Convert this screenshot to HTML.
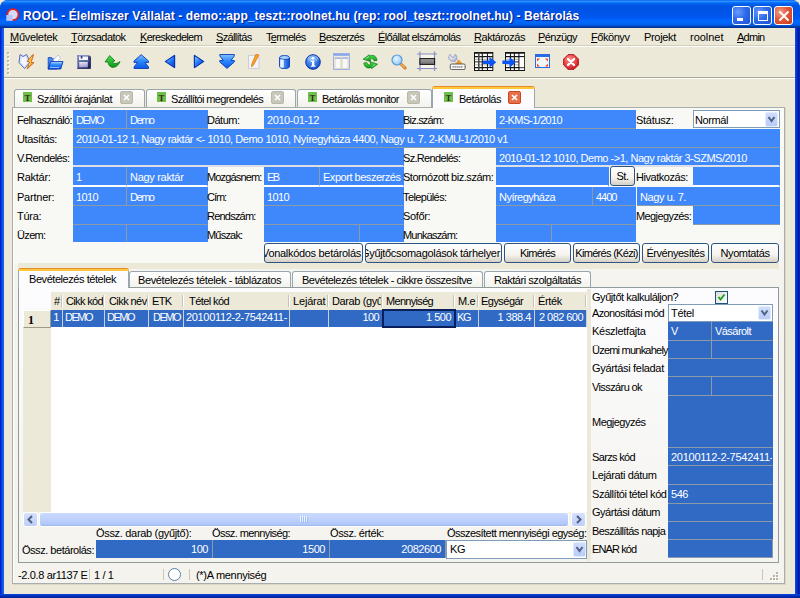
<!DOCTYPE html><html><head><meta charset="utf-8"><title>ROOL</title><style>
*{box-sizing:border-box;margin:0;padding:0}
html,body{width:800px;height:598px;overflow:hidden;background:#ECE9D8}
body{font-family:"Liberation Sans", "DejaVu Sans", sans-serif;font-size:11px;color:#000;position:relative;letter-spacing:-0.45px}
.a{position:absolute;white-space:nowrap;overflow:hidden}
.l{position:absolute;white-space:nowrap;height:19px;line-height:19px;z-index:3}
.fl{line-height:21px}
.f{position:absolute;white-space:nowrap;overflow:hidden;background:#3F88FC;color:#fff;border-right:1px solid #8A9AA6;border-bottom:1px solid #8A9AA6;line-height:20.5px;padding-left:3px}
.d{position:absolute;white-space:nowrap;overflow:hidden;background:#316AC5;color:#fff;border-right:1px solid #8A9AA6;border-bottom:1px solid #8A9AA6;line-height:17px;padding-left:3px}
.b{position:absolute;white-space:nowrap;overflow:hidden;text-align:center;border:1px solid #2E5582;border-radius:3px;background:linear-gradient(#fff 0%,#F4F3EE 60%,#D6D0C5 100%);line-height:18px;height:20px}
u{text-decoration:underline}
</style></head><body>
<div class="a" style="left:0px;top:0px;width:800px;height:598px;background:#0054E3;border-radius:8px 8px 0 0"></div>
<div class="a" style="left:0px;top:0px;width:800px;height:28px;border-radius:8px 8px 0 0;background:linear-gradient(#0058EE 0%,#3593FF 4%,#288EFF 6%,#127DFF 8%,#036FFC 10%,#0262EE 14%,#0057E5 20%,#0054E3 24%,#0055EB 56%,#005BF5 66%,#026AFE 76%,#0062EF 86%,#0052D6 92%,#0040AB 94%,#003092 100%)"></div>
<div class="a" style="left:4px;top:28px;width:791px;height:566px;background:#ECE9D8"></div>
<div class="a" style="left:795px;top:28px;width:5px;height:570px;background:linear-gradient(to right,#1A50EC 0%,#0030D0 35%,#00189C 75%,#0030C0 100%)"></div>
<div class="a" style="left:0px;top:28px;width:4px;height:570px;background:linear-gradient(to right,#0014D0 0%,#0838DC 35%,#0A5AE8 65%,#1E68E4 100%)"></div>
<div class="a" style="left:0px;top:594px;width:800px;height:4px;background:linear-gradient(#0A48DC,#002FB8 50%,#001F9C)"></div>
<svg class="a" style="left:6px;top:8px" width="15" height="14" viewBox="0 0 15 14"><circle cx="6.900" cy="6.600" r="5.500" fill="#D4DEF6" stroke="#F01C1C" stroke-width="1.700"/><rect x="0.300" y="7" width="6.300" height="5.900" fill="#B2C8F6"/></svg>
<div class="a" style="left:23px;top:6px;height:20px;line-height:20px;color:#fff;font-weight:bold;font-size:12px;letter-spacing:0.08px;text-shadow:1px 1px 1px #0A1883">ROOL - Élelmiszer Vállalat - demo::app_teszt::roolnet.hu (rep: rool_teszt::roolnet.hu) - Betárolás</div>
<div class="a" style="left:732px;top:6px;width:19px;height:19px;border:1px solid #fff;border-radius:3px;background:radial-gradient(circle at 30% 30%,#6A9CFF 0%,#2F6BEA 45%,#1F50D0 100%)"><div class="a" style="left:4px;top:11px;width:6px;height:3px;background:#fff"></div></div>
<div class="a" style="left:753px;top:6px;width:19px;height:19px;border:1px solid #fff;border-radius:3px;background:radial-gradient(circle at 30% 30%,#6A9CFF 0%,#2F6BEA 45%,#1F50D0 100%)"><div class="a" style="left:4px;top:4px;width:10px;height:10px;border:1px solid #fff;border-top:3px solid #fff"></div></div>
<div class="a" style="left:774px;top:6px;width:19px;height:19px;border:1px solid #fff;border-radius:3px;background:radial-gradient(circle at 30% 30%,#F0A088 0%,#E1573A 45%,#C73A1E 100%)"><svg class="a" style="left:0;top:0" width="19" height="19"><path d="M5 5L13 13M13 5L5 13" stroke="#fff" stroke-width="1.900" stroke-linecap="round"/></svg></div>
<div class="l" style="left:10px;top:28px;height:18px;line-height:18px;letter-spacing:-0.295px;"><u>M</u>űveletek</div>
<div class="l" style="left:71px;top:28px;height:18px;line-height:18px;letter-spacing:-0.550px;"><u>T</u>örzsadatok</div>
<div class="l" style="left:140px;top:28px;height:18px;line-height:18px;letter-spacing:-0.694px;"><u>K</u>ereskedelem</div>
<div class="l" style="left:216px;top:28px;height:18px;line-height:18px;letter-spacing:-0.677px;"><u>S</u>zállítás</div>
<div class="l" style="left:266px;top:28px;height:18px;line-height:18px;letter-spacing:-0.643px;">T<u>e</u>rmelés</div>
<div class="l" style="left:319px;top:28px;height:18px;line-height:18px;letter-spacing:-0.708px;"><u>B</u>eszerzés</div>
<div class="l" style="left:378px;top:28px;height:18px;line-height:18px;letter-spacing:-0.614px;"><u>É</u>lőállat elszámolás</div>
<div class="l" style="left:474px;top:28px;height:18px;line-height:18px;letter-spacing:-0.466px;"><u>R</u>aktározás</div>
<div class="l" style="left:538px;top:28px;height:18px;line-height:18px;letter-spacing:-0.547px;"><u>P</u>énzügy</div>
<div class="l" style="left:591px;top:28px;height:18px;line-height:18px;letter-spacing:-0.442px;"><u>F</u>őkönyv</div>
<div class="l" style="left:644px;top:28px;height:18px;line-height:18px;letter-spacing:-0.324px;">Pro<u>j</u>ekt</div>
<div class="l" style="left:690px;top:28px;height:18px;line-height:18px;letter-spacing:-0.020px;">roolnet</div>
<div class="l" style="left:737px;top:28px;height:18px;line-height:18px;letter-spacing:-0.738px;"><u>A</u>dmin</div>
<div class="a" style="left:4px;top:45px;width:791px;height:1px;background:#D2CEBB"></div>
<div class="a" style="left:4px;top:46px;width:791px;height:1px;background:#fff"></div>
<div class="a" style="left:4px;top:77px;width:791px;height:1px;background:#ACA899"></div>
<div class="a" style="left:4px;top:78px;width:791px;height:1px;background:#fff"></div>
<div class="a" style="left:8px;top:53px;width:2px;height:2px;background:#fff"></div>
<div class="a" style="left:7px;top:52px;width:2px;height:2px;background:#BDBAAA"></div>
<div class="a" style="left:8px;top:57px;width:2px;height:2px;background:#fff"></div>
<div class="a" style="left:7px;top:56px;width:2px;height:2px;background:#BDBAAA"></div>
<div class="a" style="left:8px;top:61px;width:2px;height:2px;background:#fff"></div>
<div class="a" style="left:7px;top:60px;width:2px;height:2px;background:#BDBAAA"></div>
<div class="a" style="left:8px;top:65px;width:2px;height:2px;background:#fff"></div>
<div class="a" style="left:7px;top:64px;width:2px;height:2px;background:#BDBAAA"></div>
<div class="a" style="left:8px;top:69px;width:2px;height:2px;background:#fff"></div>
<div class="a" style="left:7px;top:68px;width:2px;height:2px;background:#BDBAAA"></div>
<div class="a" style="left:8px;top:73px;width:2px;height:2px;background:#fff"></div>
<div class="a" style="left:7px;top:72px;width:2px;height:2px;background:#BDBAAA"></div>
<svg width="0" height="0" style="position:absolute"><defs>
<linearGradient id="gb" x1="0" y1="0" x2="0" y2="1"><stop offset="0" stop-color="#86C4FF"/><stop offset="0.450" stop-color="#2E88FA"/><stop offset="1" stop-color="#0C58E6"/></linearGradient>
<linearGradient id="gbh" x1="0" y1="0" x2="1" y2="0"><stop offset="0" stop-color="#7FBFFF"/><stop offset="1" stop-color="#0A50DC"/></linearGradient>
<linearGradient id="gg" x1="0" y1="0" x2="0" y2="1"><stop offset="0" stop-color="#4FE052"/><stop offset="1" stop-color="#0E9418"/></linearGradient>
<radialGradient id="gi" cx="0.4" cy="0.3" r="0.8"><stop offset="0" stop-color="#6DB5FF"/><stop offset="1" stop-color="#0B45C8"/></radialGradient>
<radialGradient id="gr" cx="0.4" cy="0.3" r="0.8"><stop offset="0" stop-color="#FF8A80"/><stop offset="1" stop-color="#D0101C"/></radialGradient>
<radialGradient id="gl" cx="0.4" cy="0.35" r="0.7"><stop offset="0" stop-color="#E8F6FF"/><stop offset="1" stop-color="#8CC8F4"/></radialGradient>
<linearGradient id="gf" x1="0" y1="0" x2="1" y2="1"><stop offset="0" stop-color="#8A94C8"/><stop offset="0.600" stop-color="#39427E"/><stop offset="1" stop-color="#10164E"/></linearGradient><linearGradient id="gfl" x1="0" y1="0" x2="0.300" y2="1"><stop offset="0" stop-color="#ECEAF8"/><stop offset="1" stop-color="#A29ECC"/></linearGradient>
<linearGradient id="gbar" x1="0" y1="0" x2="0" y2="1"><stop offset="0" stop-color="#A4A4A4"/><stop offset="1" stop-color="#6C6C6C"/></linearGradient><radialGradient id="gw" cx="0.350" cy="0.300" r="0.900"><stop offset="0" stop-color="#FFFFFF"/><stop offset="1" stop-color="#9A9EC4"/></radialGradient><linearGradient id="gtri" x1="0" y1="0" x2="0.600" y2="1"><stop offset="0" stop-color="#9AD0FF"/><stop offset="0.500" stop-color="#2C84FA"/><stop offset="1" stop-color="#0A56E4"/></linearGradient></defs></svg><svg class="a" style="left:18px;top:53px" width="17" height="17" viewBox="0 0 17 17"><path d="M2 1.500L5 3.500L8.600 1.500L12 9L6.600 15.600L1 9.600Z" fill="#DCE6FA" stroke="#5A6CB8" stroke-width="1" stroke-linejoin="round"/><path d="M4 5L7 4L9.500 9L6.500 13L3 9.500Z" fill="#F4F8FF"/><path d="M14.600 1.800L9 8.600L12 8.600L9.100 16L16 9.600L13 9.500L15.600 1.800Z" fill="#F9A51C" stroke="#C8501A" stroke-width="0.800" stroke-linejoin="round"/><path d="M13.800 4L11 8L13 8.300L11 12.500" stroke="#FFD84A" stroke-width="1" fill="none"/></svg>
<svg class="a" style="left:47px;top:54px" width="17" height="16" viewBox="0 0 17 16"><path d="M1.200 15V3.600H4.500L5.500 5H10V15Z" fill="#4A88F0" stroke="#1848C0" stroke-width="0.900"/><path d="M6.200 6L11.200 1L13.400 4.500L9 9Z" fill="#fff" stroke="#9AB4E8" stroke-width="0.700"/><path d="M1.200 15L3.600 7.600H16L13.700 15Z" fill="url(#gb)" stroke="#0A38B0" stroke-width="0.900" stroke-linejoin="round"/><path d="M4.300 8.700H14.500" stroke="#9CC8FF" stroke-width="0.900"/><path d="M3 13.500H12" stroke="#BBD4FF" stroke-width="0.900" opacity="0.800"/></svg>
<svg class="a" style="left:77px;top:55px" width="14" height="14" viewBox="0 0 14 14"><path d="M0.500 0.500H12L13.500 2V13.500H0.500Z" fill="url(#gf)" stroke="#1A2060" stroke-width="0.800"/><path d="M0.500 13V0.500H12" stroke="#8A92C8" stroke-width="1" fill="none"/><rect x="2" y="1.500" width="9" height="3.500" fill="#F4F6FC"/><rect x="3.800" y="1" width="1.600" height="2.600" fill="#2A3880"/><rect x="1.500" y="5.200" width="10" height="1.400" fill="#5E7CAC"/><rect x="2.200" y="7" width="8.600" height="5.300" fill="url(#gfl)"/></svg>
<svg class="a" style="left:104px;top:54px" width="17" height="15" viewBox="0 0 17 15"><path d="M5.700 1.500L11 7L8.500 7.500C9 10 12 10.500 16 7.500C14.500 12 10 14.500 7 13C4.500 11.500 4 9.500 4.200 8L1 8Z" fill="url(#gg)" stroke="#0B7A12" stroke-width="0.8" stroke-linejoin="round"/></svg>
<svg class="a" style="left:133px;top:54px" width="16" height="15" viewBox="0 0 16 15"><path d="M8.200 0.600L15.500 7V8.500H12L15.500 13V14.500H1V13L4.500 8.500H1V7Z" fill="url(#gb)" stroke="#0A3CB8" stroke-width="0.9" stroke-linejoin="round"/></svg>
<svg class="a" style="left:164px;top:54px" width="12" height="15" viewBox="0 0 12 15"><path d="M10.500 1.500V13.500L1.500 7.500Z" fill="url(#gbh)" stroke="#0A36B4" stroke-width="1.400" stroke-linejoin="round"/><path d="M9.700 2.800V12.200L2.600 7.500Z" fill="url(#gtri)"/></svg>
<svg class="a" style="left:193px;top:54px" width="12" height="15" viewBox="0 0 12 15"><path d="M1.500 1.500V13.500L10.500 7.500Z" fill="url(#gbh)" stroke="#0A36B4" stroke-width="1.400" stroke-linejoin="round"/><path d="M2.300 2.800V12.200L9.400 7.500Z" fill="url(#gtri)"/></svg>
<svg class="a" style="left:219px;top:54px" width="16" height="15" viewBox="0 0 16 15"><path d="M8 14.400L15.300 8V6.500H12L15.300 2V0.500H0.800V2L4.300 6.500H0.800V8Z" fill="url(#gb)" stroke="#0A3CB8" stroke-width="0.9" stroke-linejoin="round"/></svg>
<svg class="a" style="left:248px;top:54px" width="12" height="15" viewBox="0 0 12 15"><path d="M0.500 1.500H9L11 3V14.500H0.500Z" fill="#F4F4F8" stroke="#C4C4D0" stroke-width="0.8"/><path d="M8 0L11 1L5.500 11L3.500 13L3.800 10Z" fill="#F7A21B" stroke="#D8741A" stroke-width="0.7"/></svg>
<svg class="a" style="left:279px;top:55px" width="11" height="14" viewBox="0 0 11 14"><path d="M0.500 2.500V11.500C0.500 14.300 10.500 14.300 10.500 11.500V2.500" fill="url(#gbh)" stroke="#0A3CB8" stroke-width="0.9"/><ellipse cx="5.500" cy="2.500" rx="5" ry="2" fill="#A8D0FF" stroke="#0A3CB8" stroke-width="0.9"/><rect x="1.300" y="4.500" width="3.500" height="8" fill="#fff" opacity="0.85"/></svg>
<svg class="a" style="left:305px;top:54px" width="16" height="16" viewBox="0 0 16 16"><circle cx="8" cy="8" r="7.300" fill="url(#gi)" stroke="#0A32A8" stroke-width="1"/><ellipse cx="8" cy="4.500" rx="5.500" ry="3.300" fill="#fff" opacity="0.280"/><circle cx="8" cy="4.300" r="1.400" fill="#fff"/><path d="M5.800 6.800H9.300V11.500H10.500V12.800H5.800V11.500H7V8H5.800Z" fill="#fff"/></svg>
<svg class="a" style="left:333px;top:53px" width="17" height="17" viewBox="0 0 17 17"><rect x="0.500" y="0.500" width="16" height="16" fill="#F0ECE0" stroke="#8AA4E8" stroke-width="0.800"/><rect x="1" y="1" width="15" height="1.800" fill="#86A6EE"/><rect x="2" y="4.500" width="6" height="11" fill="#FAF8F2" stroke="#C8C4B4" stroke-width="0.6"/><rect x="9" y="4.500" width="6" height="11" fill="#FAF8F2" stroke="#C8C4B4" stroke-width="0.6"/><rect x="2" y="4.500" width="6" height="1.500" fill="#A8B8E8"/><rect x="9" y="4.500" width="6" height="1.500" fill="#A8B8E8"/></svg>
<svg class="a" style="left:363px;top:54px" width="15" height="16" viewBox="0 0 15 16"><path d="M0.200 5.200L6.200 0.800L6.600 2.200C9.500 0.200 13.500 1.800 14 6.400L11 6.900C10.600 4.600 8.800 4.200 7.200 5L7.600 7.600Z" fill="url(#gg)" stroke="#0A7A14" stroke-width="0.700" stroke-linejoin="round"/><path d="M14.600 10.200L8.600 14.600L8.200 13.200C5.300 15.200 1.300 13.600 0.800 9L3.800 8.500C4.200 10.800 6 11.200 7.600 10.400L7.200 7.800Z" fill="url(#gg)" stroke="#0A7A14" stroke-width="0.700" stroke-linejoin="round"/><path d="M2.500 5L5.800 2.600M9.200 12.600L12 10.400" stroke="#8CF08C" stroke-width="0.900" fill="none"/></svg>
<svg class="a" style="left:391px;top:54px" width="16" height="16" viewBox="0 0 16 16"><path d="M9 9L14 14" stroke="#C8741A" stroke-width="3" stroke-linecap="round"/><path d="M9.500 9.500L13.500 13.500" stroke="#F4B86A" stroke-width="1.200" stroke-linecap="round"/><circle cx="6" cy="6" r="5" fill="url(#gl)" stroke="#5A9ADC" stroke-width="1.200"/></svg>
<svg class="a" style="left:417px;top:51px" width="20" height="20" viewBox="0 0 20 20"><rect x="3" y="3" width="14.500" height="14.500" fill="#F8F6EA"/><path d="M3 0.500V20M17.500 0.500V20M0 3H20M0 17.500H20" stroke="#8A8CC4" stroke-width="1.200"/><rect x="2.900" y="7.600" width="14.700" height="5.800" fill="url(#gbar)" stroke="#141414" stroke-width="1"/></svg>
<svg class="a" style="left:448px;top:53px" width="18" height="17" viewBox="0 0 18 17"><path d="M5.500 5.500L10 9.500" stroke="#A8ACCC" stroke-width="3.400" stroke-linecap="round"/><path d="M5.500 5.500L10 9.500" stroke="#E8EAF6" stroke-width="1.800" stroke-linecap="round"/><path d="M10.900 6.600L15 11.500H7Z" fill="#F7941B"/><path d="M2.200 1.300C0.200 3 0.300 6.300 2.600 7.800C4.800 9.200 7.800 8.300 8.600 5.800C9.200 4 8.600 2.200 7.200 1.200L5.800 4.200L3.600 4.200Z" fill="url(#gw)" stroke="#8890B8" stroke-width="0.700"/><rect x="2.300" y="11" width="14.800" height="5.600" rx="1.200" fill="#FAFAFA" stroke="#5A5A5A" stroke-width="1"/><path d="M4.500 13.800H15" stroke="#8A8A8A" stroke-width="1.800" stroke-dasharray="1.300 0.700"/></svg>
<svg class="a" style="left:474px;top:52px" width="23" height="19" viewBox="0 0 23 19"><rect x="0.500" y="0.500" width="18.300" height="18" fill="#fff" stroke="#111" stroke-width="1"/><path d="M0.500 1.200H18.800M0.500 4.700H18.800M0.500 15.600H18.800" stroke="#161616" stroke-width="1.300"/><path d="M0.500 9.900H18.800" stroke="#222" stroke-width="1"/><path d="M0.500 7.300H18.800M0.500 12.800H18.800" stroke="#8A8A8A" stroke-width="0.700"/><path d="M4.800 0.500V18.500" stroke="#444" stroke-width="1.500"/><path d="M8.300 0.500V18.500M13.500 0.500V18.500" stroke="#1A1A1A" stroke-width="1.100"/><rect x="14.300" y="16.500" width="3.800" height="1.300" fill="#fff"/><rect x="14.300" y="1.900" width="3.800" height="1.600" fill="#fff"/><path d="M9.100 8.400H15.500V5L22.300 10.300L15.500 15.700V12.100H9.100Z" fill="#0A54F4"/></svg>
<svg class="a" style="left:502px;top:52px" width="23" height="19" viewBox="0 0 23 19"><rect x="3.500" y="0.500" width="19.200" height="18" fill="#fff" stroke="#111" stroke-width="1"/><path d="M3.500 1.200H22.700M3.500 4.700H22.700M3.500 15.600H22.700" stroke="#161616" stroke-width="1.300"/><path d="M3.500 9.900H17" stroke="#222" stroke-width="1"/><path d="M3.500 7.300H17M3.500 12.800H17" stroke="#8A8A8A" stroke-width="0.700"/><path d="M8.500 0.500V18.500M12.400 0.500V18.500" stroke="#1A1A1A" stroke-width="1.100"/><path d="M17 0.500V18.500" stroke="#1A1A1A" stroke-width="1.200"/><rect x="17.700" y="5.400" width="4.300" height="9.900" fill="#fff"/><rect x="17.700" y="1.900" width="4.300" height="1.600" fill="#fff"/><rect x="17.700" y="16.600" width="4.300" height="1" fill="#fff"/><path d="M0.400 8.400H7.500V5L13.700 10.300L7.500 15.700V12.100H0.400Z" fill="#0A54F4"/></svg>
<svg class="a" style="left:535px;top:54px" width="15" height="14" viewBox="0 0 15 14"><rect x="0.500" y="0.500" width="14" height="13" fill="#F4F6FA" stroke="#2A6AE8" stroke-width="1"/><rect x="0.500" y="0.500" width="14" height="2.500" fill="#2A6AE8"/><path d="M2 4.500H5L2 7.500ZM13 4.500H10L13 7.500ZM2 12.500H5L2 9.500ZM13 12.500H10L13 9.500Z" fill="#F0481E"/></svg>
<svg class="a" style="left:563px;top:54px" width="16" height="16" viewBox="0 0 16 16"><path d="M5 0.700H11L15.300 5V11L11 15.300H5L0.700 11V5Z" fill="url(#gr)" stroke="#B00A14" stroke-width="1"/><path d="M5 5L11 11M11 5L5 11" stroke="#fff" stroke-width="2.400" stroke-linecap="round"/></svg>

<div class="a" style="left:12px;top:107px;width:773px;height:477px;background:linear-gradient(#FBFBF9,#F4F3EE 40%);border:1px solid #A8AEAE;box-shadow:1px 1px 0 #DAD7C8,inset 1px 1px 0 #fff"></div>
<div class="a" style="left:14px;top:89px;width:131px;height:18px;background:linear-gradient(#FFFFFF,#F3F2EC);border:1px solid #9AA6AE;border-bottom:none;border-radius:3px 3px 0 0"></div>
<div class="a" style="left:23px;top:92px;width:9px;height:10px;background:#6FC04A;color:#35281C;font-family:'Liberation Serif',serif;font-weight:bold;font-size:9px;line-height:12px;text-align:center;letter-spacing:0">T</div>
<div class="l" style="left:37px;top:90px;height:18px;line-height:18px;letter-spacing:-0.462px;">Szállítói árajánlat</div>
<div class="a" style="left:120px;top:91px;width:13px;height:13px;background:#C9C7BA;border:1px solid #B9B7A8;border-radius:2px"><svg class="a" style="left:0;top:0" width="11" height="11"><path d="M3 3L8 8M8 3L3 8" stroke="#fff" stroke-width="1.7"/></svg></div>
<div class="a" style="left:146px;top:89px;width:150px;height:18px;background:linear-gradient(#FFFFFF,#F3F2EC);border:1px solid #9AA6AE;border-bottom:none;border-radius:3px 3px 0 0"></div>
<div class="a" style="left:157px;top:92px;width:9px;height:10px;background:#6FC04A;color:#35281C;font-family:'Liberation Serif',serif;font-weight:bold;font-size:9px;line-height:12px;text-align:center;letter-spacing:0">T</div>
<div class="l" style="left:171px;top:90px;height:18px;line-height:18px;letter-spacing:-0.627px;">Szállítói megrendelés</div>
<div class="a" style="left:271px;top:91px;width:13px;height:13px;background:#C9C7BA;border:1px solid #B9B7A8;border-radius:2px"><svg class="a" style="left:0;top:0" width="11" height="11"><path d="M3 3L8 8M8 3L3 8" stroke="#fff" stroke-width="1.7"/></svg></div>
<div class="a" style="left:297px;top:89px;width:135px;height:18px;background:linear-gradient(#FFFFFF,#F3F2EC);border:1px solid #9AA6AE;border-bottom:none;border-radius:3px 3px 0 0"></div>
<div class="a" style="left:308px;top:92px;width:9px;height:10px;background:#6FC04A;color:#35281C;font-family:'Liberation Serif',serif;font-weight:bold;font-size:9px;line-height:12px;text-align:center;letter-spacing:0">T</div>
<div class="l" style="left:322px;top:90px;height:18px;line-height:18px;letter-spacing:-0.542px;">Betárolás monitor</div>
<div class="a" style="left:407px;top:91px;width:13px;height:13px;background:#C9C7BA;border:1px solid #B9B7A8;border-radius:2px"><svg class="a" style="left:0;top:0" width="11" height="11"><path d="M3 3L8 8M8 3L3 8" stroke="#fff" stroke-width="1.7"/></svg></div>
<div class="a" style="left:432px;top:86px;width:103px;height:22px;background:#FCFCFE;border:1px solid #9AA6AE;border-bottom:none;border-radius:3px 3px 0 0;border-top:none"></div>
<div class="a" style="left:432px;top:86px;width:103px;height:3px;background:linear-gradient(#E68B2C 0,#E68B2C 33%,#FFC73C 34%);border-radius:3px 3px 0 0"></div>
<div class="a" style="left:444px;top:92px;width:9px;height:10px;background:#6FC04A;color:#35281C;font-family:'Liberation Serif',serif;font-weight:bold;font-size:9px;line-height:12px;text-align:center;letter-spacing:0">T</div>
<div class="l" style="left:459px;top:90px;height:18px;line-height:18px;letter-spacing:-0.498px;">Betárolás</div>
<div class="a" style="left:508px;top:91px;width:13px;height:13px;background:#E4704C;border:1px solid #D2441E;border-radius:2px"><svg class="a" style="left:0;top:0" width="11" height="11"><path d="M3 3L8 8M8 3L3 8" stroke="#fff" stroke-width="1.7"/></svg></div>
<div class="a" style="left:14px;top:108px;width:766px;height:156px;background:#F8F8F5"></div>
<div class="l fl" style="left:17px;top:110px;letter-spacing:-0.615px;">Felhasználó:</div>
<div class="f" style="left:73px;top:110px;width:54px;height:19px;letter-spacing:-1.500px;">DEMO</div>
<div class="f" style="left:127px;top:110px;width:81px;height:19px;letter-spacing:-1.461px;border-right-color:#3F88FC;">Demo</div>
<div class="l fl" style="left:207px;top:110px;letter-spacing:-0.495px;">Dátum:</div>
<div class="f" style="left:264px;top:110px;width:140px;height:19px;letter-spacing:-0.428px;border-right-color:#3F88FC;">2010-01-12</div>
<div class="l fl" style="left:403px;top:110px;letter-spacing:-0.799px;">Biz.szám:</div>
<div class="f" style="left:496px;top:110px;width:140px;height:19px;letter-spacing:-0.661px;border-right-color:#3F88FC;">2-KMS-1/2010</div>
<div class="l fl" style="left:636px;top:110px;letter-spacing:-0.294px;">Státusz:</div>
<div class="a" style="left:693px;top:110px;width:87px;height:18px;background:#fff;border:1px solid #7F9DB9;line-height:19px;padding-left:1px;letter-spacing:-0.409px;">Normál</div>
<div class="a" style="left:765px;top:112px;width:13px;height:15px;background:linear-gradient(#CFDDFD,#B9CBF8);border:1px solid #E3EBFE;border-radius:2px"><svg class="a" style="left:0;top:0" width="11" height="13" viewBox="0 0 11 13"><path d="M2.500 4.0L5.5 8.0L8.5 4.0" stroke="#4D6185" stroke-width="2" fill="none"/></svg></div>
<div class="l fl" style="left:17px;top:129px;letter-spacing:-0.378px;">Utasítás:</div>
<div class="f" style="left:73px;top:129px;width:707px;height:19px;letter-spacing:-0.455px;border-right-color:#3F88FC;">2010-01-12 1, Nagy raktár &lt;- 1010, Demo 1010, Nyíregyháza 4400, Nagy u. 7. 2-KMU-1/2010 v1</div>
<div class="l fl" style="left:17px;top:148px;letter-spacing:-0.584px;">V.Rendelés:</div>
<div class="f" style="left:73px;top:148px;width:331px;height:19px;border-bottom:2px solid #DCE0E6;border-right-color:#3F88FC;"></div>
<div class="l fl" style="left:403px;top:148px;letter-spacing:-0.678px;">Sz.Rendelés:</div>
<div class="f" style="left:496px;top:148px;width:284px;height:19px;border-bottom:2px solid #DCE0E6;letter-spacing:-0.488px;border-right-color:#3F88FC;">2010-01-12 1010, Demo -&gt;1, Nagy raktár 3-SZMS/2010</div>
<div class="l fl" style="left:17px;top:167px;letter-spacing:-0.267px;">Raktár:</div>
<div class="f" style="left:73px;top:167px;width:54px;height:20px;border-bottom:2px solid #fff;">1</div>
<div class="f" style="left:127px;top:167px;width:81px;height:20px;border-bottom:2px solid #fff;letter-spacing:-0.305px;border-right-color:#3F88FC;">Nagy raktár</div>
<div class="l fl" style="left:207px;top:167px;letter-spacing:-0.838px;">Mozgásnem:</div>
<div class="f" style="left:264px;top:167px;width:56px;height:20px;border-bottom:2px solid #fff;letter-spacing:-1.594px;">EB</div>
<div class="f" style="left:320px;top:167px;width:84px;height:20px;border-bottom:2px solid #fff;letter-spacing:-0.468px;border-right-color:#3F88FC;">Export beszerzés</div>
<div class="l fl" style="left:403px;top:167px;letter-spacing:-0.463px;">Stornózott biz.szám:</div>
<div class="f" style="left:496px;top:167px;width:113px;height:20px;border-bottom:2px solid #fff;border-right-color:#3F88FC;"></div>
<div class="b" style="left:610px;top:166px;width:25px;">St.</div>
<div class="l fl" style="left:636px;top:167px;letter-spacing:-0.451px;">Hivatkozás:</div>
<div class="f" style="left:693px;top:167px;width:87px;height:20px;border-bottom:2px solid #fff;border-right-color:#3F88FC;"></div>
<div class="l fl" style="left:17px;top:187px;letter-spacing:-0.218px;">Partner:</div>
<div class="f" style="left:73px;top:187px;width:54px;height:19px;letter-spacing:-0.621px;">1010</div>
<div class="f" style="left:127px;top:187px;width:81px;height:19px;letter-spacing:-1.461px;border-right-color:#3F88FC;">Demo</div>
<div class="l fl" style="left:207px;top:187px;letter-spacing:-1.059px;">Cím:</div>
<div class="f" style="left:264px;top:187px;width:140px;height:19px;letter-spacing:-0.621px;border-right-color:#3F88FC;">1010</div>
<div class="l fl" style="left:403px;top:187px;letter-spacing:-0.605px;">Település:</div>
<div class="f" style="left:496px;top:187px;width:97px;height:19px;letter-spacing:-0.524px;">Nyíregyháza</div>
<div class="f" style="left:593px;top:187px;width:43px;height:19px;letter-spacing:-0.996px;border-right-color:#3F88FC;">4400</div>
<div class="f" style="left:637px;top:187px;width:143px;height:19px;letter-spacing:-0.414px;border-right-color:#3F88FC;">Nagy u. 7.</div>
<div class="l fl" style="left:17px;top:206px;letter-spacing:-0.277px;">Túra:</div>
<div class="f" style="left:73px;top:206px;width:135px;height:19px;border-right-color:#3F88FC;"></div>
<div class="l fl" style="left:207px;top:206px;letter-spacing:-0.782px;">Rendszám:</div>
<div class="f" style="left:264px;top:206px;width:140px;height:19px;border-right-color:#3F88FC;"></div>
<div class="l fl" style="left:403px;top:206px;letter-spacing:-0.360px;">Sofőr:</div>
<div class="f" style="left:496px;top:206px;width:140px;height:19px;border-right-color:#3F88FC;"></div>
<div class="l fl" style="left:636px;top:206px;letter-spacing:-0.597px;">Megjegyzés:</div>
<div class="f" style="left:693px;top:206px;width:87px;height:19px;border-right-color:#3F88FC;"></div>
<div class="l fl" style="left:17px;top:225px;letter-spacing:-0.656px;">Üzem:</div>
<div class="f" style="left:73px;top:225px;width:54px;height:17px;border-bottom-color:#3F88FC;"></div>
<div class="f" style="left:127px;top:225px;width:81px;height:17px;border-bottom-color:#3F88FC;border-right-color:#3F88FC;"></div>
<div class="l fl" style="left:207px;top:225px;letter-spacing:-0.796px;">Műszak:</div>
<div class="f" style="left:264px;top:225px;width:96px;height:17px;border-bottom-color:#3F88FC;"></div>
<div class="f" style="left:360px;top:225px;width:44px;height:17px;border-bottom-color:#3F88FC;border-right-color:#3F88FC;"></div>
<div class="l fl" style="left:403px;top:225px;letter-spacing:-0.806px;">Munkaszám:</div>
<div class="f" style="left:496px;top:225px;width:56px;height:17px;border-bottom-color:#3F88FC;"></div>
<div class="f" style="left:552px;top:225px;width:84px;height:17px;border-bottom-color:#3F88FC;border-right-color:#3F88FC;"></div>
<div class="b" style="left:264px;top:243px;width:99px;display:flex;justify-content:flex-end;padding-right:1px;letter-spacing:-0.309px;"><span>Vonalkódos betárolás</span></div>
<div class="b" style="left:365px;top:243px;width:137px;display:flex;justify-content:flex-end;padding-right:1px;letter-spacing:-0.320px;"><span>Gyűjtőcsomagolások tárhelyer</span></div>
<div class="b" style="left:504px;top:243px;width:67px;display:flex;justify-content:center;letter-spacing:-0.763px;"><span>Kimérés</span></div>
<div class="b" style="left:573px;top:243px;width:67px;display:flex;justify-content:center;letter-spacing:-0.688px;"><span>Kimérés (Kézi)</span></div>
<div class="b" style="left:642px;top:243px;width:67px;display:flex;justify-content:center;letter-spacing:-0.466px;"><span>Érvényesítés</span></div>
<div class="b" style="left:711px;top:243px;width:68px;display:flex;justify-content:center;letter-spacing:-0.398px;"><span>Nyomtatás</span></div>
<div class="a" style="left:18px;top:263px;width:761px;height:6px;background:#ECE9D8"></div>
<div class="a" style="left:18px;top:287px;width:761px;height:276px;background:linear-gradient(#FCFCFE,#F4F3EE);border:1px solid #919B9C"></div>
<div class="a" style="left:18px;top:268px;width:111px;height:20px;background:#FCFCFE;border:1px solid #9AA6AE;border-bottom:none;border-radius:3px 3px 0 0;border-top:none"></div>
<div class="a" style="left:18px;top:268px;width:111px;height:3px;background:linear-gradient(#E68B2C 0,#E68B2C 33%,#FFC73C 34%);border-radius:3px 3px 0 0"></div>
<div class="l" style="left:29px;top:271px;height:17px;line-height:17px;letter-spacing:-0.442px;">Bevételezés tételek</div>
<div class="a" style="left:129px;top:271px;width:162px;height:16px;background:linear-gradient(#FFFFFF,#F3F2EC);border:1px solid #9AA6AE;border-bottom:none;border-radius:3px 3px 0 0"></div>
<div class="l" style="left:138px;top:272px;height:17px;line-height:17px;letter-spacing:-0.385px;">Bevételezés tételek - táblázatos</div>
<div class="a" style="left:292px;top:271px;width:191px;height:16px;background:linear-gradient(#FFFFFF,#F3F2EC);border:1px solid #9AA6AE;border-bottom:none;border-radius:3px 3px 0 0"></div>
<div class="l" style="left:302px;top:272px;height:17px;line-height:17px;letter-spacing:-0.485px;">Bevételezés tételek - cikkre összesítve</div>
<div class="a" style="left:484px;top:271px;width:107px;height:16px;background:linear-gradient(#FFFFFF,#F3F2EC);border:1px solid #9AA6AE;border-bottom:none;border-radius:3px 3px 0 0"></div>
<div class="l" style="left:494px;top:272px;height:17px;line-height:17px;letter-spacing:-0.450px;">Raktári szolgáltatás</div>
<div class="a" style="left:23px;top:310px;width:564px;height:202px;background:#fff"></div>
<div class="a" style="left:51px;top:292px;width:536px;height:18px;background:#ECE9D8"></div>
<div class="a" style="left:23px;top:310px;width:28px;height:202px;background:#ECE9D8"></div>
<div class="a" style="left:587px;top:289px;width:4px;height:272px;background:#ECE9D8"></div>
<div class="a" style="left:51px;top:291px;width:12px;height:19px;"></div>
<div class="a" style="left:54px;top:292px;width:7px;height:18px;line-height:18px;letter-spacing:-0.125px;">#</div>
<div class="a" style="left:61px;top:295px;width:1px;height:12px;background:#C5C2B8"></div>
<div class="a" style="left:62px;top:295px;width:1px;height:12px;background:#fff"></div>
<div class="a" style="left:63px;top:291px;width:42px;height:19px;"></div>
<div class="a" style="left:66px;top:292px;width:37px;height:18px;line-height:18px;letter-spacing:-0.648px;">Cikk kód</div>
<div class="a" style="left:103px;top:295px;width:1px;height:12px;background:#C5C2B8"></div>
<div class="a" style="left:104px;top:295px;width:1px;height:12px;background:#fff"></div>
<div class="a" style="left:105px;top:291px;width:44px;height:19px;"></div>
<div class="a" style="left:109px;top:292px;width:38px;height:18px;line-height:18px;letter-spacing:-0.573px;">Cikk név</div>
<div class="a" style="left:147px;top:295px;width:1px;height:12px;background:#C5C2B8"></div>
<div class="a" style="left:148px;top:295px;width:1px;height:12px;background:#fff"></div>
<div class="a" style="left:149px;top:291px;width:35px;height:19px;"></div>
<div class="a" style="left:152px;top:292px;width:30px;height:18px;line-height:18px;letter-spacing:-0.635px;">ETK</div>
<div class="a" style="left:182px;top:295px;width:1px;height:12px;background:#C5C2B8"></div>
<div class="a" style="left:183px;top:295px;width:1px;height:12px;background:#fff"></div>
<div class="a" style="left:184px;top:291px;width:106px;height:19px;"></div>
<div class="a" style="left:189px;top:292px;width:99px;height:18px;line-height:18px;letter-spacing:-0.583px;">Tétel kód</div>
<div class="a" style="left:288px;top:295px;width:1px;height:12px;background:#C5C2B8"></div>
<div class="a" style="left:289px;top:295px;width:1px;height:12px;background:#fff"></div>
<div class="a" style="left:290px;top:291px;width:39px;height:19px;"></div>
<div class="a" style="left:293px;top:292px;width:34px;height:18px;line-height:18px;letter-spacing:-0.177px;">Lejárat</div>
<div class="a" style="left:327px;top:295px;width:1px;height:12px;background:#C5C2B8"></div>
<div class="a" style="left:328px;top:295px;width:1px;height:12px;background:#fff"></div>
<div class="a" style="left:329px;top:291px;width:54px;height:19px;"></div>
<div class="a" style="left:332px;top:292px;width:49px;height:18px;line-height:18px;letter-spacing:-0.388px;">Darab (gyűjtő</div>
<div class="a" style="left:381px;top:295px;width:1px;height:12px;background:#C5C2B8"></div>
<div class="a" style="left:382px;top:295px;width:1px;height:12px;background:#fff"></div>
<div class="a" style="left:383px;top:291px;width:72px;height:19px;"></div>
<div class="a" style="left:386px;top:292px;width:67px;height:18px;line-height:18px;letter-spacing:-0.689px;">Mennyiség</div>
<div class="a" style="left:453px;top:295px;width:1px;height:12px;background:#C5C2B8"></div>
<div class="a" style="left:454px;top:295px;width:1px;height:12px;background:#fff"></div>
<div class="a" style="left:455px;top:291px;width:24px;height:19px;"></div>
<div class="a" style="left:458px;top:292px;width:19px;height:18px;line-height:18px;letter-spacing:-0.315px;">M.e</div>
<div class="a" style="left:477px;top:295px;width:1px;height:12px;background:#C5C2B8"></div>
<div class="a" style="left:478px;top:295px;width:1px;height:12px;background:#fff"></div>
<div class="a" style="left:479px;top:291px;width:56px;height:19px;"></div>
<div class="a" style="left:481px;top:292px;width:52px;height:18px;line-height:18px;letter-spacing:-0.536px;">Egységár</div>
<div class="a" style="left:533px;top:295px;width:1px;height:12px;background:#C5C2B8"></div>
<div class="a" style="left:534px;top:295px;width:1px;height:12px;background:#fff"></div>
<div class="a" style="left:535px;top:291px;width:52px;height:19px;"></div>
<div class="a" style="left:538px;top:292px;width:47px;height:18px;line-height:18px;letter-spacing:-0.377px;">Érték</div>
<div class="a" style="left:585px;top:295px;width:1px;height:12px;background:#C5C2B8"></div>
<div class="a" style="left:586px;top:295px;width:1px;height:12px;background:#fff"></div>
<div class="a" style="left:23px;top:310px;width:28px;height:18px;background:#ECE9D8;border-top:1px solid #fff;border-left:1px solid #fff;border-bottom:1px solid #9D9A8C;border-right:1px solid #9D9A8C"></div>
<div class="a" style="left:28px;top:311px;height:17px;line-height:19px;font-weight:bold;font-family:'Liberation Serif',serif;font-size:12px;letter-spacing:0">1</div>
<div class="a" style="left:51px;top:310px;width:12px;height:17px;background:#316AC5;color:#fff;border-right:1px solid #C8D0E0;line-height:14px;text-align:right;padding-right:3px;">1</div>
<div class="a" style="left:63px;top:310px;width:42px;height:17px;background:#316AC5;color:#fff;border-right:1px solid #C8D0E0;line-height:14px;padding-left:2px;letter-spacing:-1.500px;">DEMO</div>
<div class="a" style="left:105px;top:310px;width:44px;height:17px;background:#316AC5;color:#fff;border-right:1px solid #C8D0E0;line-height:14px;padding-left:2px;letter-spacing:-1.500px;">DEMO</div>
<div class="a" style="left:149px;top:310px;width:35px;height:17px;background:#316AC5;color:#fff;border-right:1px solid #C8D0E0;line-height:14px;text-align:right;padding-right:3px;letter-spacing:-1.500px;">DEMO</div>
<div class="a" style="left:184px;top:310px;width:106px;height:17px;background:#316AC5;color:#fff;border-right:1px solid #C8D0E0;line-height:14px;padding-left:2px;letter-spacing:-0.329px;">20100112-2-7542411-</div>
<div class="a" style="left:290px;top:310px;width:39px;height:17px;background:#316AC5;color:#fff;border-right:1px solid #C8D0E0;line-height:14px;padding-left:2px;"></div>
<div class="a" style="left:329px;top:310px;width:54px;height:17px;background:#316AC5;color:#fff;border-right:1px solid #C8D0E0;line-height:14px;text-align:right;padding-right:3px;letter-spacing:-0.620px;">100</div>
<div class="a" style="left:383px;top:310px;width:72px;height:17px;background:#316AC5;color:#fff;border-right:1px solid #C8D0E0;line-height:14px;text-align:right;padding-right:3px;letter-spacing:-0.506px;">1 500</div>
<div class="a" style="left:455px;top:310px;width:24px;height:17px;background:#316AC5;color:#fff;border-right:1px solid #C8D0E0;line-height:14px;padding-left:2px;letter-spacing:-1.453px;">KG</div>
<div class="a" style="left:479px;top:310px;width:56px;height:17px;background:#316AC5;color:#fff;border-right:1px solid #C8D0E0;line-height:14px;text-align:right;padding-right:3px;letter-spacing:-0.458px;">1 388.4</div>
<div class="a" style="left:535px;top:310px;width:52px;height:17px;background:#316AC5;color:#fff;border-right:1px solid #C8D0E0;line-height:14px;text-align:right;padding-right:3px;letter-spacing:-0.549px;">2 082 600</div>
<div class="a" style="left:382px;top:309px;width:74px;height:19px;border:2px solid #0A1E5A"></div>
<div class="a" style="left:23px;top:512px;width:564px;height:15px;background:#F5F4EF"></div>
<div class="a" style="left:23px;top:512px;width:15px;height:15px;background:linear-gradient(#D5E1FD,#BDCDF8);border:1px solid #fff;border-radius:3px"><svg class="a" style="left:0;top:0" width="13" height="13"><path d="M8 3L4.500 6.500L8 10" stroke="#4D6185" stroke-width="2" fill="none"/></svg></div>
<div class="a" style="left:571px;top:512px;width:15px;height:15px;background:linear-gradient(#D5E1FD,#BDCDF8);border:1px solid #fff;border-radius:3px"><svg class="a" style="left:0;top:0" width="13" height="13"><path d="M5 3L8.500 6.500L5 10" stroke="#4D6185" stroke-width="2" fill="none"/></svg></div>
<div class="a" style="left:39px;top:512px;width:530px;height:15px;background:linear-gradient(#CADAFF,#BED1FD 50%,#B0C7F9 88%,#98B3EC);border:1px solid #fff;border-radius:3px"></div>
<div class="a" style="left:300px;top:516px;width:1px;height:6px;background:#EEF4FE"></div>
<div class="a" style="left:301px;top:517px;width:1px;height:6px;background:#8EABF0;opacity:0.55"></div>
<div class="a" style="left:302px;top:516px;width:1px;height:6px;background:#EEF4FE"></div>
<div class="a" style="left:303px;top:517px;width:1px;height:6px;background:#8EABF0;opacity:0.55"></div>
<div class="a" style="left:304px;top:516px;width:1px;height:6px;background:#EEF4FE"></div>
<div class="a" style="left:305px;top:517px;width:1px;height:6px;background:#8EABF0;opacity:0.55"></div>
<div class="a" style="left:306px;top:516px;width:1px;height:6px;background:#EEF4FE"></div>
<div class="a" style="left:307px;top:517px;width:1px;height:6px;background:#8EABF0;opacity:0.55"></div>
<div class="l" style="left:96px;top:526px;height:14px;line-height:14px;letter-spacing:-0.314px;">Össz. darab (gyűjtő):</div>
<div class="l" style="left:212px;top:526px;height:14px;line-height:14px;letter-spacing:-0.589px;">Össz. mennyiség:</div>
<div class="l" style="left:330px;top:526px;height:14px;line-height:14px;letter-spacing:-0.391px;">Össz. érték:</div>
<div class="l" style="left:447px;top:526px;height:14px;line-height:14px;letter-spacing:-0.527px;">Összesített mennyiségi egység:</div>
<div class="l" style="left:22px;top:543px;height:14px;line-height:14px;letter-spacing:-0.468px;">Össz. betárolás:</div>
<div class="d" style="left:96px;top:540px;width:117px;height:18px;text-align:right;padding-right:4px;line-height:19px;border-bottom:none">100</div>
<div class="d" style="left:213px;top:540px;width:117px;height:18px;text-align:right;padding-right:4px;line-height:19px;border-bottom:none">1500</div>
<div class="d" style="left:330px;top:540px;width:116px;height:18px;text-align:right;padding-right:4px;line-height:19px;border-bottom:none">2082600</div>
<div class="a" style="left:446px;top:540px;width:141px;height:19px;background:#fff;border:1px solid #7F9DB9;line-height:17px;padding-left:3px">KG</div>
<div class="a" style="left:573px;top:542px;width:13px;height:15px;background:linear-gradient(#CFDDFD,#B9CBF8);border:1px solid #E3EBFE;border-radius:2px"><svg class="a" style="left:0;top:0" width="11" height="13" viewBox="0 0 11 13"><path d="M2.500 4.0L5.5 8.0L8.5 4.0" stroke="#4D6185" stroke-width="2" fill="none"/></svg></div>
<div class="l" style="left:592px;top:288px;height:19px;line-height:19px;letter-spacing:-0.455px;">Gyűjtőt kalkuláljon?</div>
<div class="l" style="left:592px;top:304px;height:19px;line-height:19px;letter-spacing:-0.629px;">Azonosítási mód</div>
<div class="l" style="left:592px;top:322px;height:19px;line-height:19px;letter-spacing:-0.281px;">Készletfajta</div>
<div class="l" style="left:592px;top:341px;height:19px;line-height:19px;letter-spacing:-0.775px;">Üzemi munkahely</div>
<div class="l" style="left:592px;top:359px;height:19px;line-height:19px;letter-spacing:-0.322px;">Gyártási feladat</div>
<div class="l" style="left:592px;top:378px;height:19px;line-height:19px;letter-spacing:-0.605px;">Visszáru ok</div>
<div class="l" style="left:592px;top:413px;height:19px;line-height:19px;letter-spacing:-0.520px;">Megjegyzés</div>
<div class="l" style="left:592px;top:448px;height:19px;line-height:19px;letter-spacing:-0.658px;">Sarzs kód</div>
<div class="l" style="left:592px;top:466px;height:19px;line-height:19px;letter-spacing:-0.373px;">Lejárati dátum</div>
<div class="l" style="left:592px;top:485px;height:19px;line-height:19px;letter-spacing:-0.456px;">Szállítói tétel kód</div>
<div class="l" style="left:592px;top:503px;height:19px;line-height:19px;letter-spacing:-0.471px;">Gyártási dátum</div>
<div class="l" style="left:592px;top:522px;height:19px;line-height:19px;letter-spacing:-0.587px;">Beszállítás napja</div>
<div class="l" style="left:592px;top:540px;height:19px;line-height:19px;letter-spacing:-0.882px;">ENAR kód</div>
<div class="a" style="left:715px;top:291px;width:13px;height:13px;background:linear-gradient(135deg,#DCDCD7,#fff);border:1px solid #1C5180"><svg class="a" style="left:0;top:0" width="11" height="11"><path d="M2.500 5L4.500 7.500L8.500 2.500" stroke="#21A121" stroke-width="2" fill="none"/></svg></div>
<div class="a" style="left:668px;top:304px;width:105px;height:18px;background:#fff;border:1px solid #7F9DB9;line-height:16px;padding-left:2px;letter-spacing:-0.294px;">Tétel</div>
<div class="a" style="left:758px;top:306px;width:13px;height:14px;background:linear-gradient(#CFDDFD,#B9CBF8);border:1px solid #E3EBFE;border-radius:2px"><svg class="a" style="left:0;top:0" width="11" height="12" viewBox="0 0 11 12"><path d="M2.500 3.5L5.5 7.5L8.5 3.5" stroke="#4D6185" stroke-width="2" fill="none"/></svg></div>
<div class="d" style="left:668px;top:322px;width:44px;height:19px;line-height:18px;padding-left:3px;">V</div>
<div class="d" style="left:712px;top:322px;width:61px;height:19px;line-height:18px;padding-left:3px;letter-spacing:-0.545px;border-right-color:#316AC5;">Vásárolt</div>
<div class="d" style="left:668px;top:341px;width:44px;height:18px;"></div>
<div class="d" style="left:712px;top:341px;width:61px;height:18px;border-right-color:#316AC5;"></div>
<div class="d" style="left:668px;top:359px;width:105px;height:18px;border-right-color:#316AC5;"></div>
<div class="d" style="left:668px;top:377px;width:44px;height:19px;"></div>
<div class="d" style="left:712px;top:377px;width:61px;height:19px;border-right-color:#316AC5;"></div>
<div class="d" style="left:668px;top:396px;width:105px;height:52px;border-right-color:#316AC5;"></div>
<div class="d" style="left:668px;top:448px;width:105px;height:18px;line-height:18px;padding-left:3px;letter-spacing:-0.268px;border-right-color:#316AC5;">20100112-2-7542411-5</div>
<div class="d" style="left:668px;top:466px;width:105px;height:19px;border-right-color:#316AC5;"></div>
<div class="d" style="left:668px;top:485px;width:105px;height:19px;line-height:18px;padding-left:3px;letter-spacing:-0.453px;border-right-color:#316AC5;">546</div>
<div class="d" style="left:668px;top:504px;width:105px;height:18px;border-right-color:#316AC5;"></div>
<div class="d" style="left:668px;top:522px;width:105px;height:18px;border-right-color:#316AC5;"></div>
<div class="d" style="left:668px;top:540px;width:105px;height:18px;border-bottom:noneborder-right-color:#316AC5;"></div>
<div class="l" style="left:18px;top:566px;height:18px;line-height:18px;letter-spacing:-0.361px;">-2.0.8 ar1137 E</div>
<div class="a" style="left:89px;top:569px;width:1px;height:11px;background:#C9C7BA"></div>
<div class="l" style="left:94px;top:566px;height:18px;line-height:18px;letter-spacing:-0.361px;">1 / 1</div>
<div class="a" style="left:163px;top:569px;width:1px;height:11px;background:#C9C7BA"></div>
<div class="a" style="left:168px;top:568px;width:13px;height:13px;border:1px solid #5B7FA8;border-radius:7px;background:#fff"></div>
<div class="a" style="left:189px;top:569px;width:1px;height:11px;background:#C9C7BA"></div>
<div class="l" style="left:196px;top:566px;height:18px;line-height:18px;letter-spacing:-0.300px;">(*)A mennyiség</div>
<div class="a" style="left:762px;top:569px;width:1px;height:11px;background:#C9C7BA"></div>
<div class="a" style="left:777.0px;top:573.0px;width:2px;height:2px;background:#fff"></div>
<div class="a" style="left:776.0px;top:572.0px;width:2px;height:2px;background:#B8B4A2"></div>
<div class="a" style="left:774.0px;top:576.0px;width:2px;height:2px;background:#fff"></div>
<div class="a" style="left:773.0px;top:575.0px;width:2px;height:2px;background:#B8B4A2"></div>
<div class="a" style="left:777.0px;top:576.0px;width:2px;height:2px;background:#fff"></div>
<div class="a" style="left:776.0px;top:575.0px;width:2px;height:2px;background:#B8B4A2"></div>
<div class="a" style="left:771.0px;top:579.0px;width:2px;height:2px;background:#fff"></div>
<div class="a" style="left:770.0px;top:578.0px;width:2px;height:2px;background:#B8B4A2"></div>
<div class="a" style="left:774.0px;top:579.0px;width:2px;height:2px;background:#fff"></div>
<div class="a" style="left:773.0px;top:578.0px;width:2px;height:2px;background:#B8B4A2"></div>
<div class="a" style="left:777.0px;top:579.0px;width:2px;height:2px;background:#fff"></div>
<div class="a" style="left:776.0px;top:578.0px;width:2px;height:2px;background:#B8B4A2"></div>
</body></html>
